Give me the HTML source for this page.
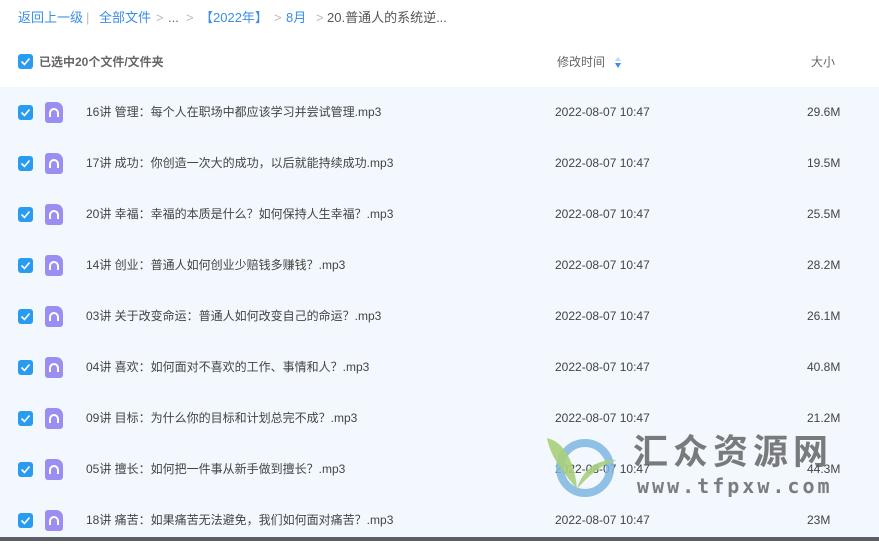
<!DOCTYPE html>
<html><head><meta charset="utf-8"><style>
*{margin:0;padding:0;box-sizing:border-box}
body{width:879px;height:541px;overflow:hidden;background:#fff;font-family:"Liberation Sans","Noto Sans CJK SC",sans-serif;position:relative;color:#333}
.bc{position:absolute;top:8px;left:18px;font-size:13px;color:#3a8ee6;white-space:nowrap}
.bc span{position:absolute;top:0;line-height:20px;height:20px}
.g{color:#bbb}
.hd{position:absolute;top:52px;left:18px;font-size:12px;line-height:20px;font-weight:bold;color:#666}
.cb{position:absolute;width:15px;height:15px;border-radius:3px;background:#2a9cf0}
.cb svg{position:absolute;left:2px;top:3px}
.rows{position:absolute;top:87px;left:0;width:879px;height:450px;background:#f2f8fd}
.row{position:absolute;left:0;width:879px;height:51px;font-size:12px;color:#444}
.row .cb{left:18px;top:18px}
.ic{position:absolute;left:45px;top:15px;width:18px;height:21px;background:#9b8ef3;border-radius:3px 7px 3px 3px}
.ic svg{position:absolute;left:3px;top:5px}
.nm,.tm,.sz{position:absolute;top:0;line-height:51px;height:51px;white-space:nowrap}
.nm{left:86px}
.tm{left:555px}
.sz{left:807px}
.bot{position:absolute;left:0;top:537px;width:879px;height:4px;background:#5a5f66}
.wm{position:absolute;left:633px;top:430px;font-size:35px;line-height:46px;font-weight:bold;color:rgba(90,90,90,.8);letter-spacing:5px;white-space:nowrap}
.wm2{position:absolute;left:637px;top:474px;font-size:20px;line-height:24px;font-weight:bold;color:rgba(90,90,90,.78);letter-spacing:3px;font-family:"DejaVu Sans Mono",monospace;white-space:nowrap}
</style></head><body>
<div class="bc">
<span style="left:0">返回上一级</span><span class="g" style="left:68px">|</span>
<span style="left:81px">全部文件</span><span class="g" style="left:138px">&gt;</span><span style="left:150px;color:#666">...</span>
<span class="g" style="left:168px">&gt;</span><span style="left:182px">【2022年】</span>
<span class="g" style="left:256px">&gt;</span><span style="left:268px">8月</span>
<span class="g" style="left:298px">&gt;</span><span style="left:309px;color:#555">20.普通人的系统逆...</span>
</div>
<div class="cb" style="left:18px;top:54px"><svg width="11" height="9" viewBox="0 0 11 9"><path d="M1.5 4.5l3 3 5-6" stroke="#fff" stroke-width="1.6" fill="none"/></svg></div>
<div class="hd" style="left:39px">已选中20个文件/文件夹</div>
<div class="hd" style="left:557px;font-weight:normal;color:#666">修改时间</div>
<svg style="position:absolute;left:614px;top:56px" width="8" height="13"><path d="M4 1L7 5H1z" fill="#bcd7f2"/><path d="M4 12L7 7H1z" fill="#3a8ee6"/></svg>
<div class="hd" style="left:811px;font-weight:normal;color:#666">大小</div>
<div class="rows">
<div class="row" style="top:0"><div class="cb"><svg width="11" height="9"><path d="M1.5 4.5l3 3 5-6" stroke="#fff" stroke-width="1.6" fill="none"/></svg></div><div class="ic"><svg width="12" height="12"><path d="M2 10V6a4 4 0 0 1 8 0v4" stroke="#fff" stroke-width="2" fill="none"/></svg></div><div class="nm">16讲 管理：每个人在职场中都应该学习并尝试管理.mp3</div><div class="tm">2022-08-07 10:47</div><div class="sz">29.6M</div></div>
<div class="row" style="top:51px"><div class="cb"><svg width="11" height="9"><path d="M1.5 4.5l3 3 5-6" stroke="#fff" stroke-width="1.6" fill="none"/></svg></div><div class="ic"><svg width="12" height="12"><path d="M2 10V6a4 4 0 0 1 8 0v4" stroke="#fff" stroke-width="2" fill="none"/></svg></div><div class="nm">17讲 成功：你创造一次大的成功，以后就能持续成功.mp3</div><div class="tm">2022-08-07 10:47</div><div class="sz">19.5M</div></div>
<div class="row" style="top:102px"><div class="cb"><svg width="11" height="9"><path d="M1.5 4.5l3 3 5-6" stroke="#fff" stroke-width="1.6" fill="none"/></svg></div><div class="ic"><svg width="12" height="12"><path d="M2 10V6a4 4 0 0 1 8 0v4" stroke="#fff" stroke-width="2" fill="none"/></svg></div><div class="nm">20讲 幸福：幸福的本质是什么？如何保持人生幸福？.mp3</div><div class="tm">2022-08-07 10:47</div><div class="sz">25.5M</div></div>
<div class="row" style="top:153px"><div class="cb"><svg width="11" height="9"><path d="M1.5 4.5l3 3 5-6" stroke="#fff" stroke-width="1.6" fill="none"/></svg></div><div class="ic"><svg width="12" height="12"><path d="M2 10V6a4 4 0 0 1 8 0v4" stroke="#fff" stroke-width="2" fill="none"/></svg></div><div class="nm">14讲 创业：普通人如何创业少赔钱多赚钱？.mp3</div><div class="tm">2022-08-07 10:47</div><div class="sz">28.2M</div></div>
<div class="row" style="top:204px"><div class="cb"><svg width="11" height="9"><path d="M1.5 4.5l3 3 5-6" stroke="#fff" stroke-width="1.6" fill="none"/></svg></div><div class="ic"><svg width="12" height="12"><path d="M2 10V6a4 4 0 0 1 8 0v4" stroke="#fff" stroke-width="2" fill="none"/></svg></div><div class="nm">03讲 关于改变命运：普通人如何改变自己的命运？.mp3</div><div class="tm">2022-08-07 10:47</div><div class="sz">26.1M</div></div>
<div class="row" style="top:255px"><div class="cb"><svg width="11" height="9"><path d="M1.5 4.5l3 3 5-6" stroke="#fff" stroke-width="1.6" fill="none"/></svg></div><div class="ic"><svg width="12" height="12"><path d="M2 10V6a4 4 0 0 1 8 0v4" stroke="#fff" stroke-width="2" fill="none"/></svg></div><div class="nm">04讲 喜欢：如何面对不喜欢的工作、事情和人？.mp3</div><div class="tm">2022-08-07 10:47</div><div class="sz">40.8M</div></div>
<div class="row" style="top:306px"><div class="cb"><svg width="11" height="9"><path d="M1.5 4.5l3 3 5-6" stroke="#fff" stroke-width="1.6" fill="none"/></svg></div><div class="ic"><svg width="12" height="12"><path d="M2 10V6a4 4 0 0 1 8 0v4" stroke="#fff" stroke-width="2" fill="none"/></svg></div><div class="nm">09讲 目标：为什么你的目标和计划总完不成？.mp3</div><div class="tm">2022-08-07 10:47</div><div class="sz">21.2M</div></div>
<div class="row" style="top:357px"><div class="cb"><svg width="11" height="9"><path d="M1.5 4.5l3 3 5-6" stroke="#fff" stroke-width="1.6" fill="none"/></svg></div><div class="ic"><svg width="12" height="12"><path d="M2 10V6a4 4 0 0 1 8 0v4" stroke="#fff" stroke-width="2" fill="none"/></svg></div><div class="nm">05讲 擅长：如何把一件事从新手做到擅长？.mp3</div><div class="tm">2022-08-07 10:47</div><div class="sz">44.3M</div></div>
<div class="row" style="top:408px"><div class="cb"><svg width="11" height="9"><path d="M1.5 4.5l3 3 5-6" stroke="#fff" stroke-width="1.6" fill="none"/></svg></div><div class="ic"><svg width="12" height="12"><path d="M2 10V6a4 4 0 0 1 8 0v4" stroke="#fff" stroke-width="2" fill="none"/></svg></div><div class="nm">18讲 痛苦：如果痛苦无法避免，我们如何面对痛苦？.mp3</div><div class="tm">2022-08-07 10:47</div><div class="sz">23M</div></div>
</div>
<svg style="position:absolute;left:545px;top:434px" width="75" height="66"><circle cx="40" cy="34" r="25" stroke="#7fb6e0" stroke-width="8" fill="none" opacity=".85"/><path d="M2 4C20 8 30 30 32 55C20 40 6 25 2 4z" fill="#a9cf7a" opacity=".9"/><path d="M32 55C38 35 52 25 72 26C58 30 45 40 32 55z" fill="#a9cf7a" opacity=".9"/></svg>
<div class="wm">汇众资源网</div>
<div class="wm2">www.tfpxw.com</div>
<div class="bot"></div>
</body></html>
